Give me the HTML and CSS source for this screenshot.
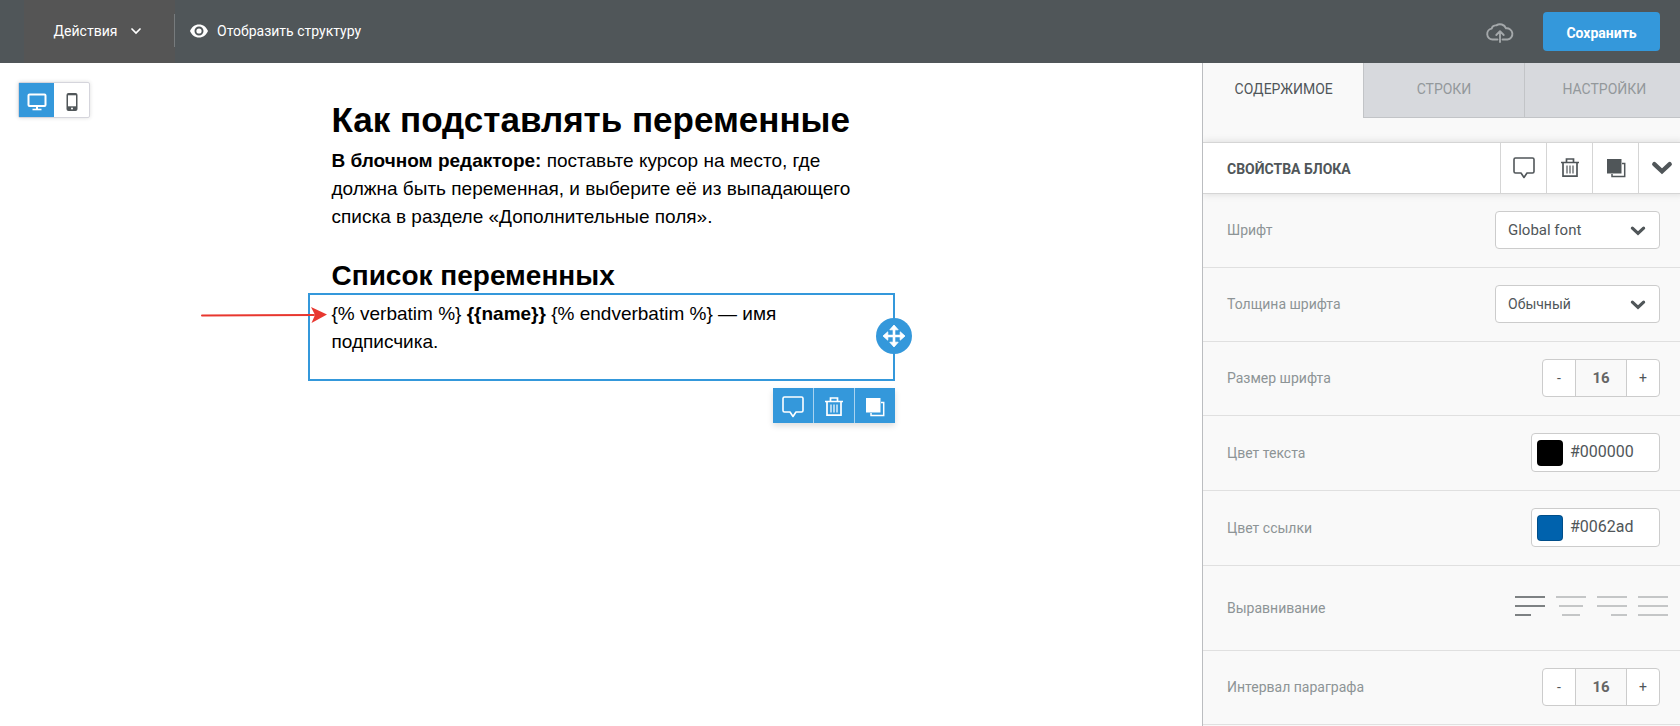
FILE: index.html
```html
<!DOCTYPE html>
<html lang="ru">
<head>
<meta charset="utf-8">
<title>Редактор письма</title>
<link rel="stylesheet" href="styles.css">
</head>
<body>
<svg class="sprite" aria-hidden="true">
  <symbol id="i-comment" viewBox="0 0 22 22"><path d="M2.500 1h17A1.500 1.500 0 0 1 21 2.500v12a1.500 1.500 0 0 1-1.500 1.500h-5.500L11 20.500 8 16H2.500A1.500 1.500 0 0 1 1 14.500v-12A1.500 1.500 0 0 1 2.500 1z" fill="none" stroke="currentColor" stroke-width="1.600" stroke-linejoin="round"/></symbol>
  <symbol id="i-trash" viewBox="0 0 22 22"><path d="M2 5.500h18M7.500 5V2h7v3M4 6v13.200h14V6" fill="none" stroke="currentColor" stroke-width="1.700"/><path d="M8 8.500v8M11 8.500v8M14 8.500v8" stroke="currentColor" stroke-width="1.200"/></symbol>
  <symbol id="i-copy" viewBox="0 0 22 22"><path d="M2 2h14.500v14.500H2z" fill="currentColor"/><path d="M17 6.500h2.700v13H7V17" fill="none" stroke="currentColor" stroke-width="1.500"/></symbol>
  <symbol id="i-chevron" viewBox="0 0 20 14"><path d="M3 3.500l7 6.500 7-6.500" fill="none" stroke="currentColor" stroke-width="4" stroke-linecap="round"/></symbol>
</svg>
<header class="topbar">
  <button class="actions" type="button">Действия
    <svg class="actions-arrow" viewBox="0 0 10 7"><path d="M1 1l4 4 4-4" fill="none" stroke="currentColor" stroke-width="1.700" stroke-linecap="round"/></svg>
  </button>
  <button class="structure" type="button">
    <svg class="eye" viewBox="0 0 18 14"><path fill="currentColor" fill-rule="evenodd" d="M9 .5C4.800.5 1.500 3.200 0 7c1.500 3.800 4.800 6.500 9 6.500S16.500 10.800 18 7C16.500 3.200 13.200.5 9 .5zM9 2.500a4.500 4.500 0 1 1 0 9 4.500 4.500 0 0 1 0-9z"/><circle cx="9" cy="7" r="2.600" fill="currentColor"/></svg>
    Отобразить структуру
  </button>
  <svg class="cloud" viewBox="0 0 28 22"><path d="M11.500 18.500H6.500a5.500 5.500 0 0 1-.8-10.900 4 4 0 0 1 4.600-3.200A6.500 6.500 0 0 1 20 7.300a5.600 5.600 0 0 1 1.500 11.200h-5M14 21V10.500M10.300 14l3.700-3.800 3.700 3.800" fill="none" stroke="currentColor" stroke-width="1.900" stroke-linecap="round" stroke-linejoin="round"/></svg>
  <button class="save" type="button">Сохранить</button>
</header>
<div class="workspace">
  <main class="canvas">
    <div class="devices">
      <button class="device device-on" type="button" aria-label="Компьютер"><svg viewBox="0 0 20 18"><path d="M2.500 1.500h15a1 1 0 0 1 1 1v9.500a1 1 0 0 1-1 1h-15a1 1 0 0 1-1-1V2.500a1 1 0 0 1 1-1zM10 13v3" fill="none" stroke="currentColor" stroke-width="2"/><path d="M5.500 16.500h9" stroke="currentColor" stroke-width="1.600"/></svg></button>
      <button class="device" type="button" aria-label="Телефон"><svg viewBox="0 0 20 18"><rect x="4.500" y="0" width="11" height="18" rx="2" fill="currentColor"/><path d="M6 2.300h8v11H6z" fill="#fff"/><circle cx="10" cy="15.600" r="1" fill="#fff"/></svg></button>
    </div>
    <article class="letter">
      <h1>Как подставлять переменные</h1>
      <p class="intro"><b>В блочном редакторе:</b> поставьте курсор на место, где должна быть переменная, и выберите её из выпадающего списка в разделе «Дополнительные поля».</p>
      <h2>Список переменных</h2>
      <section class="block">
        <p>{% verbatim %} <b>{{name}}</b> {% endverbatim %} — имя подписчика.</p>
        <svg class="pointer" viewBox="0 0 126 18"><path d="M1 9.500l112-.5" stroke="#e8372f" stroke-width="2" stroke-linecap="round"/><path d="M126 8.500L110 1l4 8-3.500 8z" fill="#e8372f"/></svg>
        <button class="move" type="button" aria-label="Переместить"><svg viewBox="0 0 24 24"><path d="M12 4v16M4 12h16" stroke="currentColor" stroke-width="2.600"/><path d="M12 1l4.200 4.800H7.800zM12 23l-4.200-4.800h8.400zM1 12l4.800-4.200v8.400zM23 12l-4.800 4.200V7.800z" fill="currentColor" stroke="currentColor" stroke-width=".8" stroke-linejoin="round"/></svg></button>
        <div class="block-tools">
          <button type="button" aria-label="Комментарий"><svg><use href="#i-comment"/></svg></button>
          <button type="button" aria-label="Удалить"><svg><use href="#i-trash"/></svg></button>
          <button type="button" aria-label="Дублировать"><svg><use href="#i-copy"/></svg></button>
        </div>
      </section>
    </article>
  </main>
  <aside class="sidebar">
    <div class="panel">
      <nav class="tabs">
        <button class="tab tab-on" type="button">СОДЕРЖИМОЕ</button>
        <button class="tab" type="button">СТРОКИ</button>
        <button class="tab" type="button">НАСТРОЙКИ</button>
      </nav>
      <div class="head">
        <h3>СВОЙСТВА БЛОКА</h3>
        <button type="button" aria-label="Комментарий"><svg><use href="#i-comment"/></svg></button>
        <button type="button" aria-label="Удалить"><svg><use href="#i-trash"/></svg></button>
        <button type="button" aria-label="Дублировать"><svg><use href="#i-copy"/></svg></button>
        <button type="button" aria-label="Свернуть"><svg><use href="#i-chevron"/></svg></button>
      </div>
      <div class="row">
        <label for="font">Шрифт</label>
        <div class="pick pick-latin"><select id="font"><option>Global font</option></select><svg><use href="#i-chevron"/></svg></div>
      </div>
      <div class="row">
        <label for="weight">Толщина шрифта</label>
        <div class="pick"><select id="weight"><option>Обычный</option></select><svg><use href="#i-chevron"/></svg></div>
      </div>
      <div class="row">
        <label for="size">Размер шрифта</label>
        <div class="stepper"><button type="button">-</button><input id="size" type="text" value="16"><button type="button">+</button></div>
      </div>
      <div class="row row-color">
        <label for="text-color">Цвет текста</label>
        <div class="color"><span class="swatch swatch-text"></span><input id="text-color" type="text" value="#000000"></div>
      </div>
      <div class="row row-color">
        <label for="link-color">Цвет ссылки</label>
        <div class="color"><span class="swatch swatch-link"></span><input id="link-color" type="text" value="#0062ad"></div>
      </div>
      <div class="row row-align">
        <span>Выравнивание</span>
        <div class="aligns">
          <button class="align-on" type="button" aria-label="По левому краю"><svg viewBox="0 0 30 22"><path d="M0 2h30M0 11h30M0 20h16"/></svg></button>
          <button type="button" aria-label="По центру"><svg viewBox="0 0 30 22"><path d="M0 2h30M3 11h24M6 20h18"/></svg></button>
          <button type="button" aria-label="По правому краю"><svg viewBox="0 0 30 22"><path d="M0 2h30M0 11h30M14 20h16"/></svg></button>
          <button type="button" aria-label="По ширине"><svg viewBox="0 0 30 22"><path d="M0 2h30M0 11h30M0 20h30"/></svg></button>
        </div>
      </div>
      <div class="row">
        <label for="gap">Интервал параграфа</label>
        <div class="stepper"><button type="button">-</button><input id="gap" type="text" value="16"><button type="button">+</button></div>
      </div>
    </div>
  </aside>
</div>
</body>
</html>
```
FILE: styles.css
```css
* { box-sizing: border-box; }
body {
  margin: 0;
  height: 100vh;
  display: flex;
  flex-direction: column;
  overflow: hidden;
  background: #fff;
  font: 14px/20px Roboto, "Noto Sans", sans-serif;
  color: #505659;
}
button, input, select { font: inherit; color: inherit; border: 0; padding: 0; margin: 0; background: none; }
button { display: flex; align-items: center; justify-content: center; }
.sprite { display: none; }

.topbar {
  flex: none;
  height: 63px;
  display: flex;
  align-items: center;
  padding: 0 20px 0 24px;
  background: #505659;
  color: #fff;
}
.actions {
  position: relative;
  height: 63px;
  width: 151px;
  padding: 0 4px 2px 0;
  gap: 14px;
  background: #555;
}
.actions::after { content: ""; position: absolute; right: 0; top: 14px; width: 1px; height: 33px; background: #777b7d; }
.actions-arrow { width: 10px; height: 7px; margin-top: 2px; }
.structure { gap: 9px; padding: 0 0 2px 15px; }
.eye { width: 18px; height: 14px; }
.cloud { width: 28px; height: 22px; margin-left: auto; margin-right: 29px; color: #a4a8aa; }
.save { width: 117px; height: 39px; padding-top: 2px; border-radius: 4px; background: #3498db; font-weight: 700; }

.workspace { flex: 1; min-height: 0; display: flex; }
.canvas { position: relative; flex: 1; padding: 35px 0 0; }
.devices {
  position: absolute;
  left: 18px;
  top: 19px;
  display: flex;
  border: 1px solid #d5d5dc;
  border-radius: 2px;
  box-shadow: 0 0 4px #0002;
  background: #fff;
}
.device { width: 35px; height: 34px; }
.device-on { background: #3498db; color: #fff; }
.device svg { width: 20px; height: 18px; margin-top: 3px; }

.letter { max-width: 587px; margin: 0 auto; color: #000; font: 19px/28px "Liberation Sans", Arial, sans-serif; }
.letter h1, .letter h2, .letter p { margin: 0; padding: 0 24px; }
.letter h1 { font-size: 35px; line-height: 44px; padding-bottom: 5px; }
.letter h2 { font-size: 28px; line-height: 34px; margin-top: 28px; }
.block { position: relative; height: 88px; border: 2px solid #3498db; }
.letter .block p { padding: 5px 22px; }
.pointer { position: absolute; left: -109px; top: 11px; width: 126px; height: 18px; }
.move { position: absolute; right: -19px; top: 23px; width: 36px; height: 36px; border-radius: 50%; background: #3498db; color: #fff; }
.move svg { width: 24px; height: 24px; }
.block-tools { position: absolute; right: -2px; top: 93px; display: flex; gap: 1px; background: #a9d3f0; box-shadow: 0 3px 6px #0002; }
.block-tools button { width: 40px; height: 35px; background: #3498db; color: #fff; }
.block-tools svg, .head svg { width: 22px; height: 22px; }
.block-tools svg { margin-top: 2px; }

.sidebar { flex: none; width: 478px; overflow: hidden; border-left: 1px solid #bbbdc0; background: #f9f9f9; }
.panel { margin-right: -4px; }
.tabs { display: grid; grid-template-columns: repeat(3, 1fr); padding-bottom: 24px; }
.tab {
  height: 55px;
  padding-bottom: 2px;
  background: #d7d9dd;
  border-left: 1px solid #c2c4c7;
  border-bottom: 1px solid #c2c4c7;
  color: #93989b;
}
.tab-on { background: #f9f9f9; border-color: transparent; color: #505659; }
.head {
  display: flex;
  height: 52px;
  border-top: 1px solid #d5d5d5;
  border-bottom: 1px solid #d5d5d5;
  background: #fff;
  box-shadow: 0 0 8px #0002;
}
.head h3 { flex: 1; margin: 0; padding-left: 24px; font-size: 14px; line-height: 52px; }
.head button { width: 46px; border-left: 1px solid #d5d5d5; }

.row {
  display: flex;
  align-items: center;
  justify-content: space-between;
  height: 74px;
  padding: 0 24px 1px 24px;
  border-bottom: 1px solid #e0e0e0;
  color: #8d9496;
}
.row-color { height: 75px; }
.row-align { height: 85px; padding-right: 16px; }
.pick, .stepper, .color {
  display: flex;
  position: relative;
  height: 38px;
  border: 1px solid #ccc;
  border-radius: 4px;
  background: #fff;
  color: #505659;
  overflow: hidden;
}
.pick { width: 165px; }
.pick select { appearance: none; width: 100%; padding: 0 12px 1px; }
.pick-latin select { font-size: 15px; }
.pick svg { position: absolute; right: 13px; top: 13px; width: 16px; height: 12px; pointer-events: none; }
.stepper { width: 118px; }
.stepper button { width: 32px; }
.stepper input { flex: 1; min-width: 0; text-align: center; font-weight: 700; font-size: 15px; background: #f9f9f9; border: solid #ccc; border-width: 0 1px; color: #666; }
.color { width: 129px; height: 39px; align-items: center; padding-left: 5px; gap: 7px; }
.color input { flex: 1; min-width: 0; padding-bottom: 2px; font-size: 16px; }
.swatch { width: 26px; height: 26px; border: 1px solid #0003; border-radius: 4px; }
.swatch-text { background: #000; }
.swatch-link { background: #0062ad; }
.aligns { display: flex; gap: 11px; padding-bottom: 3px; }
.aligns button { color: #c4c6c7; }
.aligns svg { width: 30px; height: 22px; fill: none; stroke: currentColor; stroke-width: 2; }
.aligns .align-on { color: #7d8183; }
```
